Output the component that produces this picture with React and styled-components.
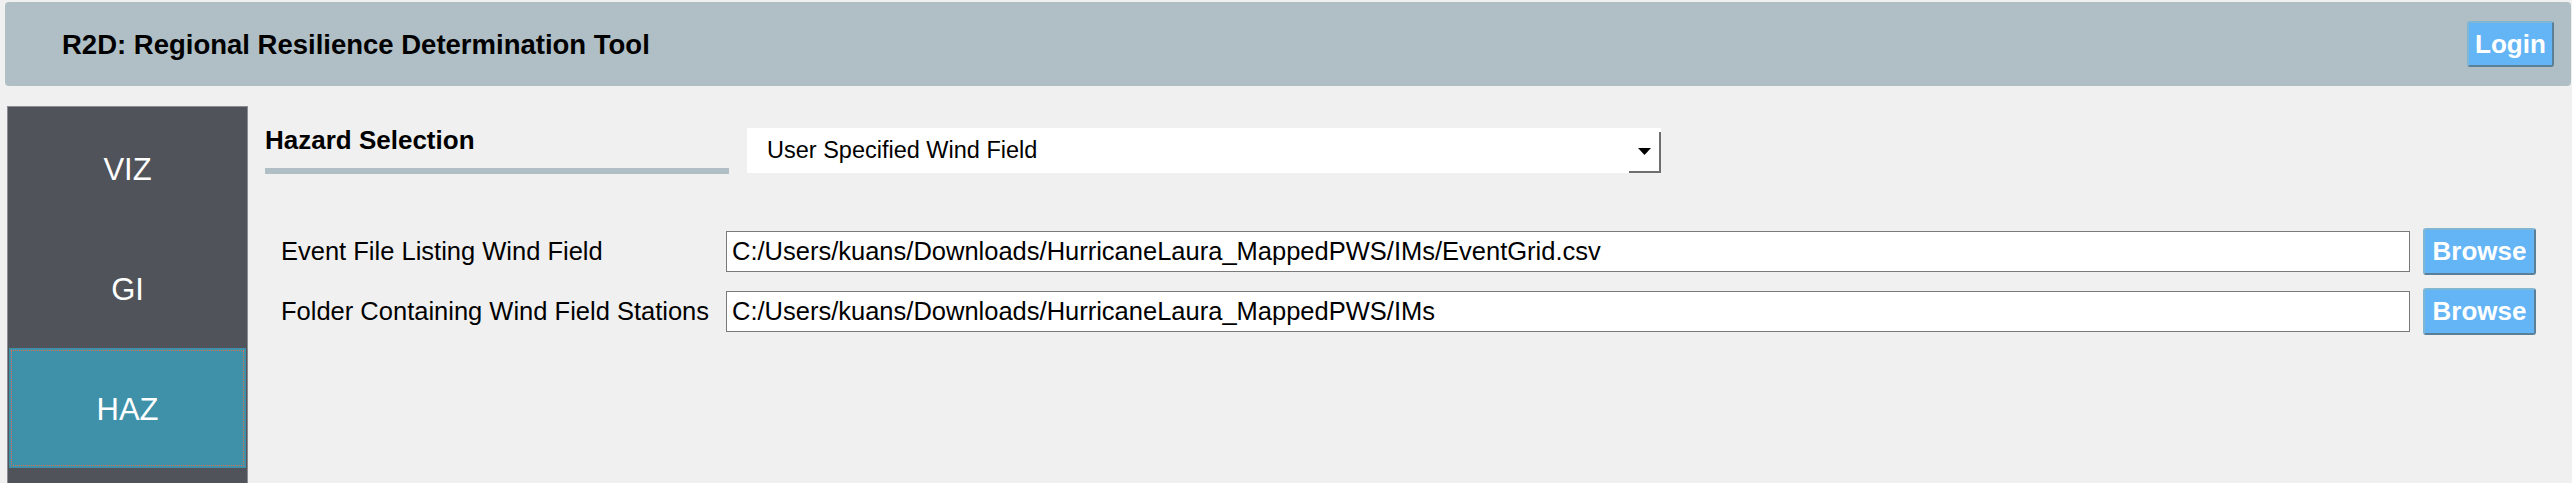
import React from 'react'
import styled, { createGlobalStyle, css } from 'styled-components'

const colors = {
  page: '#f0f0f0',
  slate: '#b0bec5',
  rail: '#505359',
  railEdge: '#8a8d93',
  active: '#3e91a8',
  focus: '#e36d4f',
  blue: '#64b5f6',
}

const GlobalStyle = createGlobalStyle`
  html, body {
    margin: 0;
    background: ${colors.page};
    font-family: "Liberation Sans", Arial, sans-serif;
  }
  #root {
    height: 483px;
    overflow: hidden;
  }
`

const Page = styled.div`
  display: flex;
  flex-direction: column;
  height: 483px;
`

const Header = styled.header`
  flex-shrink: 0;
  box-sizing: border-box;
  height: 84px;
  margin: 2px 1px 0 5px;
  padding: 0 17px 0 57px;
  border-radius: 4px;
  background: ${colors.slate};
  display: flex;
  align-items: center;
  justify-content: space-between;
`

const AppTitle = styled.h1`
  margin: 0;
  padding-top: 1px;
  font-size: 27.5px;
  font-weight: bold;
  color: #000;
`

const Button = styled.button`
  box-sizing: border-box;
  width: ${p => p.$w}px;
  height: ${p => p.$h}px;
  padding: 0;
  border: 2px solid;
  border-color: #7fb6d4 #5b7f96 #5b7f96 #7fb6d4;
  border-radius: 3px;
  background: ${colors.blue};
  color: #fff;
  font-family: inherit;
  font-size: 26px;
  font-weight: bold;
  cursor: pointer;
`

const Main = styled.div`
  flex: 1;
  min-height: 0;
  display: flex;
  margin-top: 20px;
`

const Sidebar = styled.nav`
  box-sizing: border-box;
  width: 241px;
  margin-left: 7px;
  padding-top: 1px;
  border: 1px solid ${colors.railEdge};
  border-bottom: none;
  background: ${colors.rail};
  display: flex;
  flex-direction: column;
`

const NavItem = styled.div`
  flex-shrink: 0;
  box-sizing: border-box;
  height: 120px;
  margin: 0 1px;
  padding-top: 3px;
  display: flex;
  align-items: center;
  justify-content: center;
  color: #fff;
  font-size: 31px;
  font-weight: 300;
  ${p =>
    p.$active &&
    css`
      background: ${colors.active};
      outline: 1px dotted ${colors.focus};
      outline-offset: -3px;
    `}
`

const Content = styled.section`
  flex: 1;
  min-width: 0;
  padding: 22px 36px 0 17px;
`

const SectionRow = styled.div`
  display: flex;
  align-items: flex-start;
  gap: 18px;
`

const SectionTitle = styled.div`
  width: 464px;
  margin-top: -2px;
  display: flex;
  flex-direction: column;
`

const SectionLabel = styled.h2`
  margin: 0;
  font-size: 26px;
  line-height: 29px;
  font-weight: bold;
  color: #000;
`

const SectionRule = styled.div`
  height: 6px;
  margin-top: 13px;
  background: ${colors.slate};
`

const Select = styled.div`
  box-sizing: border-box;
  width: 914px;
  height: 45px;
  padding-left: 20px;
  background: #fff;
  display: flex;
  align-items: center;
  font-size: 23.5px;
  color: #000;
`

const SelectArrow = styled.div`
  box-sizing: border-box;
  width: 32px;
  height: 41px;
  margin-left: auto;
  align-self: flex-end;
  border-right: 2px solid #6e6e6e;
  border-bottom: 2px solid #6e6e6e;
  display: flex;
  align-items: center;
  justify-content: center;
`

const Form = styled.div`
  margin-top: 54px;
  display: grid;
  grid-template-columns: 448px 1fr 113px;
  grid-auto-rows: 47px;
  column-gap: 13px;
  row-gap: 13px;
  align-items: center;
`

const FieldLabel = styled.label`
  padding-left: 16px;
  font-size: 25.5px;
  color: #000;
  white-space: nowrap;
`

const PathInput = styled.input`
  box-sizing: border-box;
  width: 100%;
  height: 41px;
  padding: 0 5px;
  border: 1px solid #7a7a7a;
  border-radius: 0;
  background: #fff;
  font-family: inherit;
  font-size: 25.5px;
  color: #000;
  outline: none;
`

const navItems = ['VIZ', 'GI', 'HAZ']

const fields = [
  {
    label: 'Event File Listing Wind Field',
    value: 'C:/Users/kuans/Downloads/HurricaneLaura_MappedPWS/IMs/EventGrid.csv',
  },
  {
    label: 'Folder Containing Wind Field Stations',
    value: 'C:/Users/kuans/Downloads/HurricaneLaura_MappedPWS/IMs',
  },
]

export default function App() {
  return (
    <Page>
      <GlobalStyle />
      <Header>
        <AppTitle>R2D: Regional Resilience Determination Tool</AppTitle>
        <Button $w={87} $h={46}>Login</Button>
      </Header>
      <Main>
        <Sidebar>
          {navItems.map(name => (
            <NavItem key={name} $active={name === 'HAZ'}>
              {name}
            </NavItem>
          ))}
        </Sidebar>
        <Content>
          <SectionRow>
            <SectionTitle>
              <SectionLabel>Hazard Selection</SectionLabel>
              <SectionRule />
            </SectionTitle>
            <Select>
              User Specified Wind Field
              <SelectArrow>
                <svg width="13" height="7" viewBox="0 0 13 7">
                  <polygon points="0,0 13,0 6.5,7" fill="#000" />
                </svg>
              </SelectArrow>
            </Select>
          </SectionRow>
          <Form>
            {fields.map(f => (
              <React.Fragment key={f.label}>
                <FieldLabel>{f.label}</FieldLabel>
                <PathInput readOnly value={f.value} />
                <Button $w={113} $h={47}>Browse</Button>
              </React.Fragment>
            ))}
          </Form>
        </Content>
      </Main>
    </Page>
  )
}
